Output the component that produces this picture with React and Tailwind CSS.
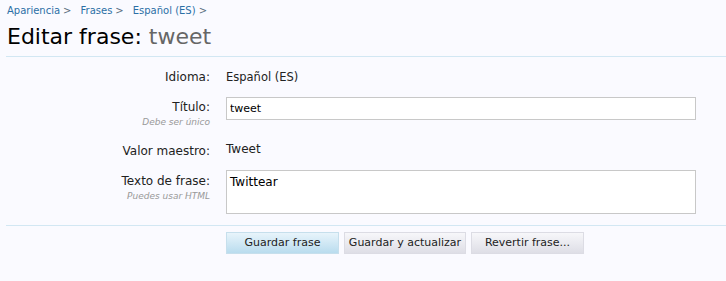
import React from "react";

const crumbs = ["Apariencia", "Frases", "Español (ES)"];

const Row = ({ label, hint, children, className = "", labelClass = "" }) => (
  <div className={`flex items-start ${className}`}>
    <div className={`w-[211px] shrink-0 pr-[1px] text-right ${labelClass}`}>
      <div className="text-[12px] leading-[18px] text-[#222]">{label}</div>
      {hint && (
        <div className="mt-[1px] text-[9px] italic leading-[11px] text-[#999]">{hint}</div>
      )}
    </div>
    <div className="ml-[15px] flex-1">{children}</div>
  </div>
);

const App = () => {
  return (
    <div
      className="h-[281px] w-[726px] overflow-hidden bg-[#fafaff]"
      style={{ fontFamily: '"DejaVu Sans", Tahoma, sans-serif' }}
    >
      <div className="px-[7px] pt-[4px]">
        <nav className="flex gap-[9px] text-[10px] leading-[14px]">
          {crumbs.map((c) => (
            <span key={c} className="text-[#2b6fa5]">
              {c}
              <span className="ml-[3px] text-[#5a6f80]">&gt;</span>
            </span>
          ))}
        </nav>
        <h1 className="mt-[5px] text-[22px] leading-[28px] text-black">
          Editar frase: <span className="text-[#666]">tweet</span>
        </h1>
      </div>

      <div className="ml-[6px] mt-[5px] border-t border-[#d2e7f3]" />

      <form className="pt-[11px]">
        <Row label="Idioma:">
          <div className="text-[11.5px] leading-[18px] text-[#222]">Español (ES)</div>
        </Row>

        <Row label="Título:" hint="Debe ser único" className="mt-[9px]" labelClass="pt-[3px]">
          <input
            readOnly
            value="tweet"
            className="h-[23px] w-[470px] border border-[#c8c8c8] bg-white px-[3px] text-[11px] text-black outline-none"
          />
        </Row>

        <Row label="Valor maestro:" className="mt-[14px]">
          <div className="-mt-[2px] text-[12px] leading-[18px] text-[#222]">Tweet</div>
        </Row>

        <Row label="Texto de frase:" hint="Puedes usar HTML" className="mt-[10px]" labelClass="pt-[2px]">
          <textarea
            readOnly
            value="Twittear"
            className="block h-[44px] w-[470px] resize-none border border-[#c8c8c8] bg-white px-[3px] py-[2px] text-[12px] text-black outline-none"
          />
        </Row>

        <div className="ml-[6px] mt-[11px] border-t border-[#d2e7f3]" />

        <div className="ml-[226px] mt-[6px] flex gap-[5px] text-[11px] text-[#222]">
          <button
            type="button"
            className="h-[22px] w-[113px] border border-[#c6dfec] bg-gradient-to-b from-[#e8f4fb] to-[#b9dcee]"
          >
            Guardar frase
          </button>
          <button
            type="button"
            className="h-[22px] w-[122px] border border-[#dcdce4] bg-gradient-to-b from-[#f7f7fa] to-[#dedee6]"
          >
            Guardar y actualizar
          </button>
          <button
            type="button"
            className="h-[22px] w-[113px] border border-[#dcdce4] bg-gradient-to-b from-[#f7f7fa] to-[#dedee6]"
          >
            Revertir frase...
          </button>
        </div>
      </form>
    </div>
  );
};

export default App;
